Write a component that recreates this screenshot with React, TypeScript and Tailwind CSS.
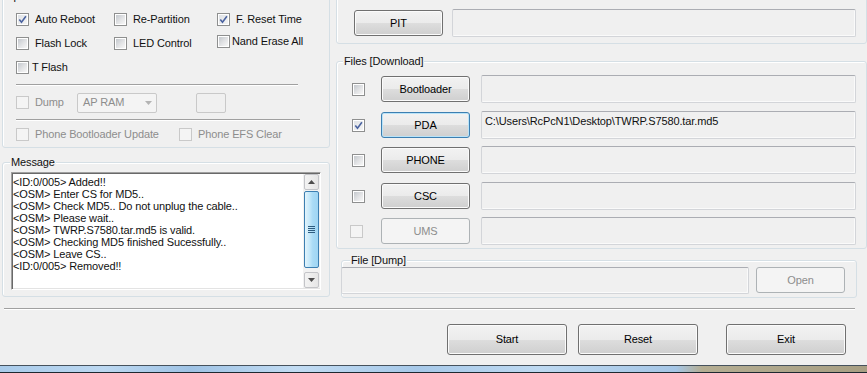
import React from "react";

type Kids = { children?: React.ReactNode; className?: string };

function Check({ checked = false, disabled = false, className = "" }: { checked?: boolean; disabled?: boolean; className?: string }) {
  return (
    <span
      className={`flex h-[13px] w-[13px] shrink-0 items-center justify-center border p-[1px] ${
        disabled ? "border-[#c9c9c9] bg-[#f4f4f4]" : "border-[#8e8f8f] bg-white"
      } ${className}`}
    >
      <span
        className={`flex h-full w-full items-center justify-center ${
          disabled
            ? "bg-[#f4f4f4]"
            : checked
            ? "bg-[linear-gradient(135deg,#dfe2e6_0%,#f4f4f4_100%)]"
            : "bg-[linear-gradient(135deg,#c4c8cd_0%,#e3e4e6_55%,#f7f7f7_100%)]"
        }`}
      >
        {checked && (
          <svg width="9" height="9" viewBox="0 0 9 9">
            <path d="M1.3 4.4 L3.5 7.2 L7.9 1.2" fill="none" stroke="#4b63a0" strokeWidth="1.6" />
          </svg>
        )}
      </span>
    </span>
  );
}

function Opt({ label, checked, disabled, gap = "gap-[6px]", className = "" }: { label: string; checked?: boolean; disabled?: boolean; gap?: string; className?: string }) {
  return (
    <div className={`flex shrink-0 items-center ${gap} ${className}`}>
      <Check checked={checked} disabled={disabled} />
      <span className={`whitespace-nowrap leading-[13px] ${disabled ? "text-[#8d8d8d]" : ""}`}>{label}</span>
    </div>
  );
}

function Btn({ children, className = "", focus = false, disabled = false }: Kids & { focus?: boolean; disabled?: boolean }) {
  const look = disabled
    ? "border-[#adb2b5] bg-[#f4f4f4] text-[#8d8d8d]"
    : `${
        focus ? "border-[#3c7fb1] shadow-[inset_0_0_0_1px_#b9e3f8]" : "border-[#707070] shadow-[inset_0_0_0_1px_#fbfbfb]"
      } bg-[linear-gradient(#f2f2f2_0%,#ebebeb_50%,#dddddd_51%,#cfcfcf_100%)] text-black`;
  return (
    <div className={`flex shrink-0 items-center justify-center rounded-[3px] border leading-[13px] ${look} ${className}`}>
      {children}
    </div>
  );
}

function Field({ children, className = "" }: Kids) {
  return (
    <div className={`shrink-0 rounded-[2px] border border-[#d3d5d9] border-t-[#abadb3] bg-[#f0f0f0] shadow-[inset_-1px_-1px_0_#fafafa] ${className}`}>
      {children}
    </div>
  );
}

function Group({ label, labelPos = "left-[6px]", children, className = "" }: Kids & { label?: string; labelPos?: string }) {
  return (
    <div className={`relative rounded-[3px] border border-[#d5dfe5] shadow-[inset_1px_1px_0_#ffffff] ${className}`}>
      {label && (
        <span className={`absolute top-[-8px] ${labelPos} bg-[#f0f0f0] px-[1px] leading-[14px] whitespace-nowrap`}>{label}</span>
      )}
      {children}
    </div>
  );
}

function Etched({ className = "" }: { className?: string }) {
  return <div className={`h-[2px] shrink-0 border-t border-b border-t-[#a0a0a0] border-b-white ${className}`} />;
}

const log = [
  "<ID:0/005> Added!!",
  "<OSM> Enter CS for MD5..",
  "<OSM> Check MD5.. Do not unplug the cable..",
  "<OSM> Please wait..",
  "<OSM> TWRP.S7580.tar.md5 is valid.",
  "<OSM> Checking MD5 finished Sucessfully..",
  "<OSM> Leave CS..",
  "<ID:0/005> Removed!!",
];

function ScrollArrow({ up }: { up?: boolean }) {
  return (
    <div className="mx-[1px] flex h-[16px] items-center justify-center rounded-[2px] border border-[#c3c4c8] bg-[linear-gradient(90deg,#f3f3f3,#e6e6e6)]">
      <svg width="7" height="4" viewBox="0 0 7 4">
        <path d={up ? "M0 4 L3.5 0 L7 4 Z" : "M0 0 L3.5 4 L7 0 Z"} fill="#4d4d4d" />
      </svg>
    </div>
  );
}

const files: { name: string; checked?: boolean; focus?: boolean; disabled?: boolean; path?: string; gap: string }[] = [
  { name: "Bootloader", gap: "" },
  { name: "PDA", checked: true, focus: true, path: "C:\\Users\\RcPcN1\\Desktop\\TWRP.S7580.tar.md5", gap: "mt-[8px]" },
  { name: "PHONE", gap: "mt-[7px]" },
  { name: "CSC", gap: "mt-[8px]" },
  { name: "UMS", disabled: true, gap: "mt-[7px]" },
];

export default function App() {
  return (
    <div className="flex h-[373px] w-[867px] flex-col overflow-hidden bg-[#f0f0f0] font-['Liberation_Sans',Arial,sans-serif] text-[11px] tracking-[-0.12px] text-[#111]">
      <div className="flex h-[308px] shrink-0 items-start">
        {/* left column */}
        <div className="flex w-[330px] shrink-0 flex-col pl-[2px]">
          <Group label="Option" labelPos="left-[1px]" className="-mt-[4px] pl-[13px] pt-[10px]">
            <div className="flex h-[24px] items-center">
              <Opt className="w-[98px]" checked label="Auto Reboot" />
              <Opt className="w-[103px]" label="Re-Partition" />
              <Opt checked label="F. Reset Time" />
            </div>
            <div className="flex h-[24px] items-center">
              <Opt className="w-[98px]" label="Flash Lock" />
              <Opt className="w-[103px]" label="LED Control" />
              <Opt className="mb-[4px]" gap="gap-[2px]" label="Nand Erase All" />
            </div>
            <div className="flex h-[24px] items-center">
              <Opt gap="gap-[3px]" label="T Flash" />
            </div>
            <Etched className="mt-[5px] w-[282px]" />
            <div className="flex h-[33px] items-center">
              <Opt className="w-[61px]" disabled label="Dump" />
              <div className="flex h-[20px] w-[80px] items-center justify-between rounded-[2px] border border-[#c9c9c9] bg-[#f4f4f4] pl-[5px] pr-[4px] text-[#8d8d8d]">
                <span className="leading-[13px]">AP RAM</span>
                <svg width="7" height="4" viewBox="0 0 7 4">
                  <path d="M0 0 L3.5 4 L7 0 Z" fill="#b4b4b4" />
                </svg>
              </div>
              <div className="ml-[39px] h-[20px] w-[30px] rounded-[2px] border border-[#c9c9c9] bg-[#f0f0f0]" />
            </div>
            <Etched className="w-[284px]" />
            <div className="flex h-[26px] items-center">
              <Opt className="w-[163px]" disabled label="Phone Bootloader Update" />
              <Opt disabled label="Phone EFS Clear" />
            </div>
          </Group>

          <Group label="Message" labelPos="left-[7px]" className="mt-[14px] pb-[6px] pl-[8px] pt-[9px]">
            <div className="flex h-[118px] w-[310px] border border-[#a0a0a0] border-b-white border-r-white bg-white shadow-[inset_1px_1px_0_#696969,inset_-1px_-1px_0_#e3e3e3]">
              <div className="flex-1 whitespace-pre pl-[1px] pt-[3px] leading-[12px]">
                {log.map((l, i) => (
                  <div key={i}>{l}</div>
                ))}
              </div>
              <div className="mb-[1px] mt-[1px] flex w-[17px] flex-col bg-[#f2f2f2]">
                <ScrollArrow up />
                <div className="mx-[1px] mt-[1px] flex h-[77px] items-center justify-center rounded-[2px] border border-[#3c7fb1] bg-[linear-gradient(90deg,#e3f4fc_0%,#c4e8fa_35%,#a9dbf6_60%,#9fd5f3_100%)]">
                  <div className="flex flex-col gap-[1px]">
                    <div className="h-[1px] w-[7px] bg-[#2d5c80]" />
                    <div className="h-[1px] w-[7px] bg-[#2d5c80]" />
                    <div className="h-[1px] w-[7px] bg-[#2d5c80]" />
                    <div className="h-[1px] w-[7px] bg-[#2d5c80]" />
                  </div>
                </div>
                <div className="mt-auto">
                  <ScrollArrow />
                </div>
              </div>
            </div>
          </Group>
        </div>

        {/* right column */}
        <div className="ml-[6px] flex w-[531px] shrink-0 flex-col">
          <Group className="-mt-[4px] pb-[6px] pl-[17px] pt-[12px]">
            <div className="flex h-[28px] items-center">
              <Btn className="h-[26px] w-[89px]">PIT</Btn>
              <Field className="ml-[9px] h-[28px] w-[404px]" />
            </div>
          </Group>

          <Group label="Files [Download]" className="mt-[17px] pb-[3px] pl-[15px] pt-[13px]">
            {files.map((f) => (
              <div key={f.name} className={`flex h-[28px] items-center ${f.gap}`}>
                <Check checked={f.checked} disabled={f.disabled} className={f.disabled ? "-ml-[2px] mr-[2px]" : ""} />
                <Btn className="ml-[16px] h-[26px] w-[89px]" focus={f.focus} disabled={f.disabled}>
                  {f.name}
                </Btn>
                <Field className="ml-[11px] h-[28px] w-[375px] pl-[3px] pt-[3px] leading-[13px] whitespace-nowrap">
                  {f.path}
                </Field>
              </div>
            ))}
          </Group>

          <Group label="File [Dump]" labelPos="left-[8px]" className="ml-[5px] mt-[11px] w-[516px] pb-[3px] pt-[6px]">
            <div className="flex items-start">
              <Field className="-ml-[1px] h-[27px] w-[408px]" />
              <Btn className="ml-[7px] h-[26px] w-[89px]" disabled>
                Open
              </Btn>
            </div>
          </Group>
        </div>
      </div>

      <Etched className="ml-[4px] w-[851px]" />

      <div className="mt-[14px] flex pl-[447px]">
        <Btn className="h-[31px] w-[120px]">Start</Btn>
        <Btn className="ml-[11px] h-[31px] w-[120px]">Reset</Btn>
        <Btn className="ml-[28px] h-[31px] w-[120px]">Exit</Btn>
      </div>

      <div className="mt-auto h-[8px] shrink-0 border-t border-b border-t-[#46525d] border-b-[#1e2830] bg-[linear-gradient(90deg,#a9cbea_0%,#bcd8f1_12%,#9fc3e5_22%,#c2dcf3_34%,#a7c9e9_48%,#bed9f1_62%,#a5c6e6_78%,#b4ad92_81%,#a89f83_100%)]" />
    </div>
  );
}
